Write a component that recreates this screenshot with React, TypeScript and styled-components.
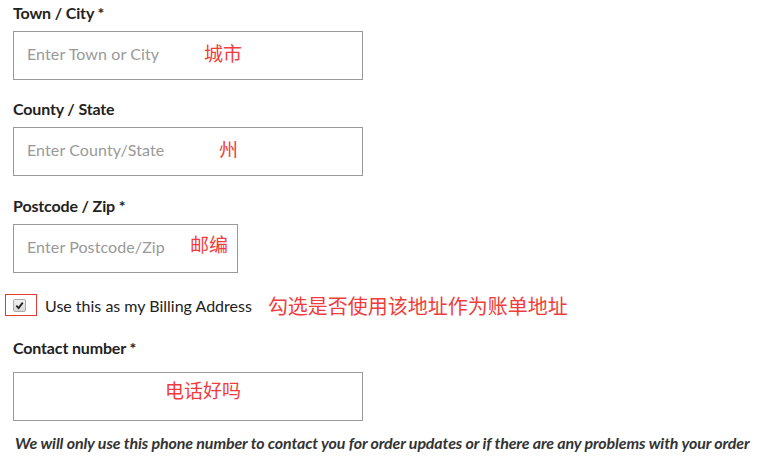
import styled, { createGlobalStyle } from "styled-components";

const GlobalStyle = createGlobalStyle`
    body {
        margin: 0;
        background: #fff;
        font-family: Lato, "Noto Sans", sans-serif;
        color: #222;
    }
`

const Form = styled.div`
    display: flex;
    flex-direction: column;
    padding: 3px 13px 0 13px;
`

const Field = styled.div<{ $gap?: number; $after?: number }>`
    display: flex;
    flex-direction: column;
    gap: ${(p) => p.$gap ?? 8}px;
    margin-bottom: ${(p) => p.$after ?? 19}px;
`

const Label = styled.label`
    font-size: 16px;
    font-weight: 700;
    line-height: 20px;
    letter-spacing: -0.15px;
    color: #222;
`

const InputBox = styled.div<{ $width: number }>`
    position: relative;
    box-sizing: border-box;
    width: ${(p) => p.$width}px;
    height: 49px;
    border: 1px solid #999;
    display: flex;
    align-items: center;
    padding: 0 0 4px 13px;
    font-size: 16px;
    letter-spacing: 0.1px;
    color: #999;
`

const Note = styled.span<{ $left: number; $top?: number }>`
    position: absolute;
    left: ${(p) => p.$left}px;
    top: ${(p) => p.$top ?? 9}px;
    font-family: "Noto Sans CJK SC", sans-serif;
    font-size: 19px;
    line-height: 24px;
    letter-spacing: 0;
    color: #f03c3c;
    white-space: nowrap;
`

const CheckRow = styled.div`
    display: flex;
    align-items: center;
    margin: 2px 0 22px -8px;
    height: 22px;
`

const CheckFrame = styled.div`
    box-sizing: border-box;
    width: 32px;
    height: 22px;
    border: 1px solid #e53935;
    display: flex;
    align-items: center;
    padding-left: 7px;
    margin-right: 8px;
`

const CheckBox = styled.div`
    box-sizing: border-box;
    width: 13px;
    height: 13px;
    border-radius: 2px;
    border: 1px solid #aaa;
    background: linear-gradient(#f2f2f2, #d8d8d8);
    display: flex;
    align-items: center;
    justify-content: center;
`

const CheckText = styled.span`
    font-size: 16px;
    color: #222;
    margin-right: 16px;
`

const RedText = styled.span`
    font-family: "Noto Sans CJK SC", sans-serif;
    font-size: 20px;
    color: #f03c3c;
`

const Hint = styled.p`
    margin: -7px 0 0 2px;
    font-size: 16px;
    line-height: 20px;
    font-style: italic;
    font-weight: 700;
    color: #333;
    letter-spacing: -0.13px;
    white-space: nowrap;
`

const App = () => {
    return (
        <>
            <GlobalStyle />
            <Form>
                <Field>
                    <Label>Town / City *</Label>
                    <InputBox $width={350}>
                        Enter Town or City
                        <Note $left={190}>城市</Note>
                    </InputBox>
                </Field>
                <Field $after={20}>
                    <Label>County / State</Label>
                    <InputBox $width={350}>
                        Enter County/State
                        <Note $left={205}>州</Note>
                    </InputBox>
                </Field>
                <Field>
                    <Label>Postcode / Zip *</Label>
                    <InputBox $width={225}>
                        Enter Postcode/Zip
                        <Note $left={176} $top={7}>邮编</Note>
                    </InputBox>
                </Field>
                <CheckRow>
                    <CheckFrame>
                        <CheckBox>
                            <svg width="9" height="9" viewBox="0 0 10 10">
                                <path d="M1.5 5.2 L4 7.8 L8.6 1.8" fill="none" stroke="#222" strokeWidth="2" />
                            </svg>
                        </CheckBox>
                    </CheckFrame>
                    <CheckText>Use this as my Billing Address</CheckText>
                    <RedText>勾选是否使用该地址作为账单地址</RedText>
                </CheckRow>
                <Field $gap={14}>
                    <Label>Contact number *</Label>
                    <InputBox $width={350}>
                        <Note $left={151} $top={5}>电话好吗</Note>
                    </InputBox>
                </Field>
                <Hint>We will only use this phone number to contact you for order updates or if there are any problems with your order</Hint>
            </Form>
        </>
    )
}

export default App;
